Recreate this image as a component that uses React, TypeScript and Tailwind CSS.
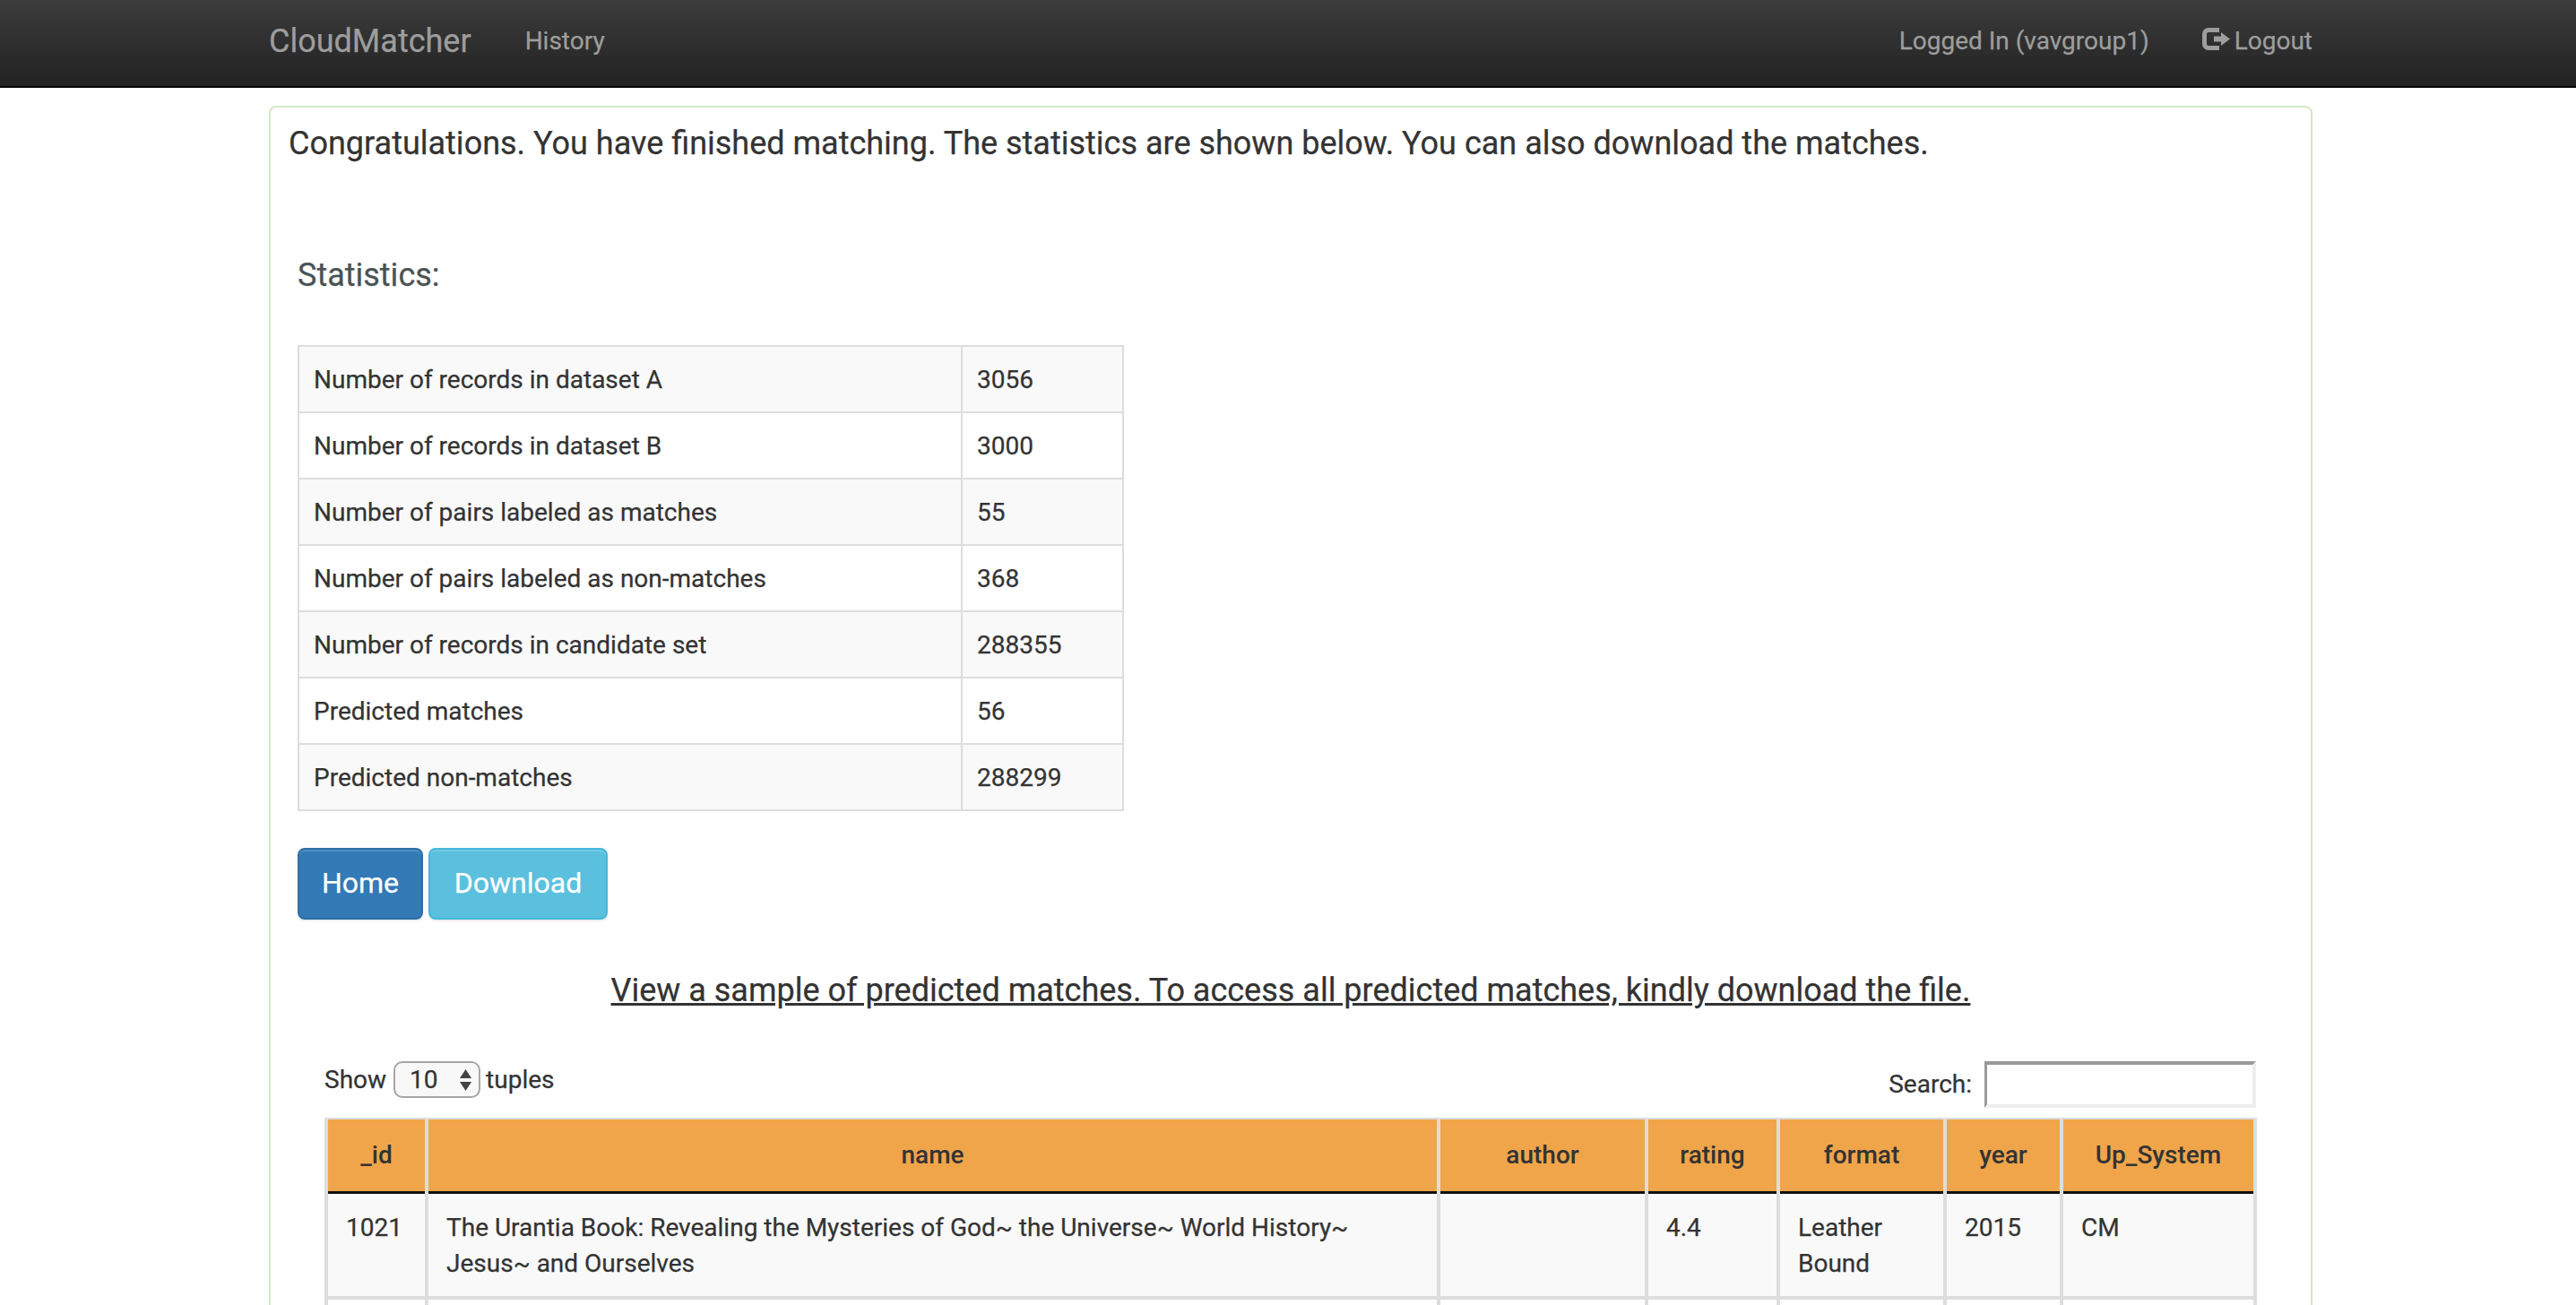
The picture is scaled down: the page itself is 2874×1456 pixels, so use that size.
const stats: [string, string][] = [
  ["Number of records in dataset A", "3056"],
  ["Number of records in dataset B", "3000"],
  ["Number of pairs labeled as matches", "55"],
  ["Number of pairs labeled as non-matches", "368"],
  ["Number of records in candidate set", "288355"],
  ["Predicted matches", "56"],
  ["Predicted non-matches", "288299"],
];

const headers = ["_id", "name", "author", "rating", "format", "year", "Up_System"];
const widths = [112, 1129, 232, 147, 186, 130, 216];

function LogoutIcon() {
  return (
    <svg width="31" height="25" viewBox="0 0 31 25" className="-mt-[6px] shrink-0">
      <path d="M19 2.5H7a4.5 4.5 0 0 0-4.5 4.5v11a4.5 4.5 0 0 0 4.5 4.5h12" fill="none" stroke="#9d9d9d" strokeWidth="5" />
      <path d="M13 9.5h8V5l10 7.5L21 20v-4.5h-8z" fill="#9d9d9d" />
    </svg>
  );
}

export default function App() {
  return (
    <div className="h-screen overflow-hidden bg-white font-['Roboto',sans-serif] text-[28px] leading-[40px] text-[#333] [-webkit-text-stroke:0.25px]">
      <nav className="flex h-[98px] items-center justify-between border-b-2 border-[#080808] bg-gradient-to-b from-[#3c3c3c] to-[#222] pb-1 pl-[300px] pr-[294px] text-[#9d9d9d]">
        <div className="flex items-center">
          <span className="text-[36px]">CloudMatcher</span>
          <span className="ml-[60px]">History</span>
        </div>
        <div className="flex items-center">
          <span>Logged In (vavgroup1)</span>
          <span className="ml-[59px] flex items-center gap-[5px]">
            <LogoutIcon />
            Logout
          </span>
        </div>
      </nav>

      <main className="ml-[300px] mr-[294px] mt-5 rounded-lg border-2 border-[#d6e9c6] px-5 pt-5">
        <h4 className="text-[36px] leading-[40px] text-[#333]">
          Congratulations. You have finished matching. The statistics are shown below. You can also download the matches.
        </h4>

        <div className="px-[10px]">
          <h4 className="mt-[107px] text-[36px] leading-[40px] text-[#4a5355]">Statistics:</h4>

          <table className="mt-[58px] w-[922px] table-fixed border-collapse">
            <colgroup>
              <col className="w-[740px]" />
              <col />
            </colgroup>
            <tbody>
              {stats.map(([label, value], i) => (
                <tr key={label} className={i % 2 === 0 ? "bg-[#f9f9f9]" : "bg-white"}>
                  <td className="border-2 border-[#ddd] px-4 pb-[15px] pt-[17px]">{label}</td>
                  <td className="border-2 border-[#ddd] px-4 pb-[15px] pt-[17px]">{value}</td>
                </tr>
              ))}
            </tbody>
          </table>

          <div className="mt-[41px] flex gap-[6px]">
            <button className="h-20 w-[140px] rounded-lg border-2 border-[#2e6da4] bg-[#337ab7] pb-[2px] text-[32px] text-white shadow-[inset_0_2px_0_rgba(255,255,255,0.15),0_2px_2px_rgba(0,0,0,0.075)]">Home</button>
            <button className="h-20 w-[200px] rounded-lg border-2 border-[#46b8da] bg-[#5bc0de] pb-[2px] text-[32px] text-white shadow-[inset_0_2px_0_rgba(255,255,255,0.15),0_2px_2px_rgba(0,0,0,0.075)]">Download</button>
          </div>

          <h4 className="mt-[59px] text-center text-[36px] leading-[40px] underline">
            View a sample of predicted matches. To access all predicted matches, kindly download the file.
          </h4>

          <div className="mx-[30px] mt-[59px]">
            <div className="flex h-[63px] items-start justify-between">
              <label className="flex items-center gap-2">
                Show
                <span className="relative flex h-[41px] w-[97px] items-center rounded-[10px] border-2 border-[#a6a6a6] bg-[#f8f8f8] pl-4">
                  10
                  <svg width="13" height="24" viewBox="0 0 13 24" className="absolute right-[8px] top-[7px]">
                    <path d="M6.5 0L13 10H0zM0 14h13L6.5 24z" fill="#444" />
                  </svg>
                </span>
                <span className="-ml-[2px]">tuples</span>
              </label>
              <label className="flex items-center gap-[14px] pr-px">
                <span>Search:</span>
                <span className="block h-[52px] w-[303px] border-b-4 border-l-[3px] border-r-4 border-t-4 border-b-[#eee] border-l-[#999] border-r-[#eee] border-t-[#999] bg-white" />
              </label>
            </div>

            <table className="w-[2152px] table-fixed border-collapse">
              <colgroup>
                {widths.map((w, i) => (
                  <col key={i} style={{ width: w }} />
                ))}
              </colgroup>
              <thead>
                <tr className="h-[82px] bg-[#f0a54a]">
                  {headers.map((h) => (
                    <th key={h} className="border-x-4 border-b-[3px] border-t-2 border-x-[#ddd] border-b-[#111] border-t-[#ddd] px-5 text-center font-medium [-webkit-text-stroke:0px]">
                      {h}
                    </th>
                  ))}
                </tr>
              </thead>
              <tbody>
                <tr className="bg-[#f9f9f9]">
                  {[
                    "1021",
                    "The Urantia Book: Revealing the Mysteries of God~ the Universe~ World History~ Jesus~ and Ourselves",
                    "",
                    "4.4",
                    "Leather Bound",
                    "2015",
                    "CM",
                  ].map((c, i) => (
                    <td key={i} className="border-4 border-t-0 border-[#ddd] px-5 pb-[16px] pt-[18px] align-top">
                      {c}
                    </td>
                  ))}
                </tr>
                <tr className="h-[80px] bg-white">
                  {headers.map((h) => (
                    <td key={h} className="border-4 border-[#ddd]" />
                  ))}
                </tr>
              </tbody>
            </table>
          </div>
        </div>
      </main>
    </div>
  );
}
